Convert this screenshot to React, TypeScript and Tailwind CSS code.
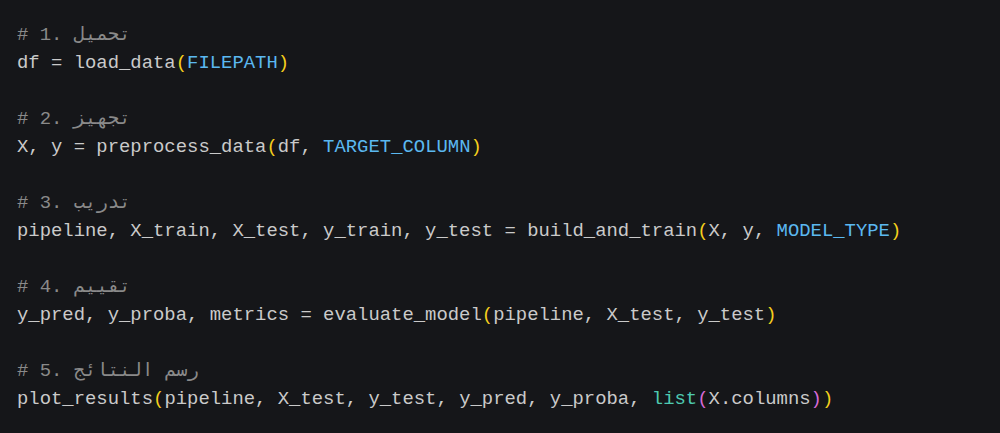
import React from "react";

const C = ({ children }: { children: React.ReactNode }) => (
  <span className="text-[#8a8a8a]">{children}</span>
);
const Y = ({ children }: { children: React.ReactNode }) => (
  <span className="text-[#f5cf1d]">{children}</span>
);
const B = ({ children }: { children: React.ReactNode }) => (
  <span className="text-[#5bb8f0]">{children}</span>
);
const P = ({ children }: { children: React.ReactNode }) => (
  <span className="text-[#d66ad6]">{children}</span>
);
const T = ({ children }: { children: React.ReactNode }) => (
  <span className="text-[#4ec9b0]">{children}</span>
);

export default function App() {
  return (
    <div className="w-[1000px] h-[433px] bg-[#151619] overflow-hidden">
      <pre
        className="m-0 pt-[21px] pl-[17px] text-[18.9px] leading-[28px] text-[#cacaca] whitespace-pre"
        style={{ fontFamily: '"Liberation Mono", "DejaVu Sans Mono", monospace' }}
      >
        <div><C># 1. تحميل</C></div>
        <div>df = load_data<Y>(</Y><B>FILEPATH</B><Y>)</Y></div>
        <div> </div>
        <div><C># 2. تجهيز</C></div>
        <div>X, y = preprocess_data<Y>(</Y>df, <B>TARGET_COLUMN</B><Y>)</Y></div>
        <div> </div>
        <div><C># 3. تدريب</C></div>
        <div>pipeline, X_train, X_test, y_train, y_test = build_and_train<Y>(</Y>X, y, <B>MODEL_TYPE</B><Y>)</Y></div>
        <div> </div>
        <div><C># 4. تقييم</C></div>
        <div>y_pred, y_proba, metrics = evaluate_model<Y>(</Y>pipeline, X_test, y_test<Y>)</Y></div>
        <div> </div>
        <div><C># 5. رسم النتائج</C></div>
        <div>plot_results<Y>(</Y>pipeline, X_test, y_test, y_pred, y_proba, <T>list</T><P>(</P>X.columns<P>)</P><Y>)</Y></div>
      </pre>
    </div>
  );
}
